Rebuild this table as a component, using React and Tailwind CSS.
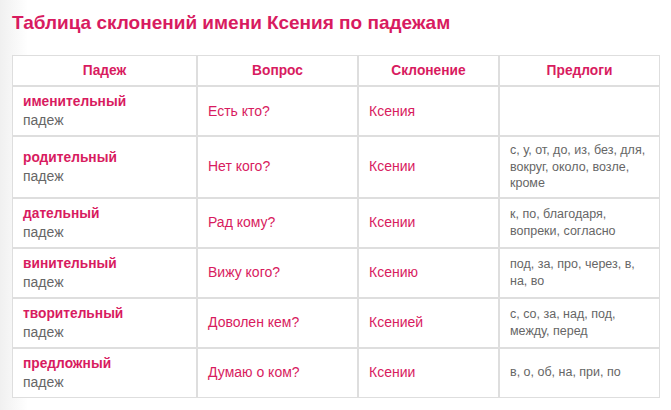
import React from "react";

const rows = [
  { c: "именительный", q: "Есть кто?", d: "Ксения", p: "" },
  { c: "родительный", q: "Нет кого?", d: "Ксении", p: "с, у, от, до, из, без, для, вокруг, около, возле, кроме" },
  { c: "дательный", q: "Рад кому?", d: "Ксении", p: "к, по, благодаря, вопреки, согласно" },
  { c: "винительный", q: "Вижу кого?", d: "Ксению", p: "под, за, про, через, в, на, во" },
  { c: "творительный", q: "Доволен кем?", d: "Ксенией", p: "с, со, за, над, под, между, перед" },
  { c: "предложный", q: "Думаю о ком?", d: "Ксении", p: "в, о, об, на, при, по" },
];

export default function App() {
  return (
    <div
      className="w-[671px] h-[410px] overflow-hidden bg-[linear-gradient(to_right,#f0f0f0,#ffffff_28px)] pl-[12px] pt-[12px]"
      style={{ fontFamily: '"Liberation Sans", Arial, sans-serif' }}
    >
      <h1 className="text-[19px] leading-[21px] font-bold text-[#d81b60]">
        Таблица склонений имени Ксения по падежам
      </h1>
      <table className="mt-[22px] w-[648px] border-separate border-spacing-0 bg-white table-fixed">
        <colgroup>
          <col className="w-[185px]" />
          <col className="w-[161px]" />
          <col className="w-[141px]" />
          <col className="w-[161px]" />
        </colgroup>
        <thead>
          <tr>
            {["Падеж", "Вопрос", "Склонение", "Предлоги"].map((h) => (
              <th
                key={h}
                className="border border-[#dedede] py-[5px] text-center text-[13.75px] leading-[19px] font-bold text-[#d81b60]"
              >
                {h}
              </th>
            ))}
          </tr>
        </thead>
        <tbody>
          {rows.map((r) => (
            <tr key={r.c}>
              <td className="border border-[#dedede] pl-[10px] pr-[8px] py-[5px] align-middle">
                <div className="text-[13.75px] leading-[19px] font-bold text-[#d81b60]">{r.c}</div>
                <div className="text-[14px] leading-[19px] text-[#666666]">падеж</div>
              </td>
              <td className="border border-[#dedede] pl-[10px] pr-[8px] py-[5px] align-middle text-[14px] text-[#d81b60]">
                {r.q}
              </td>
              <td className="border border-[#dedede] pl-[10px] pr-[8px] py-[5px] align-middle text-[14px] text-[#d81b60]">
                {r.d}
              </td>
              <td className="border border-[#dedede] pl-[10px] pr-[8px] py-[5px] align-middle text-[12.5px] leading-[16.5px] text-[#666666]">
                {r.p}
              </td>
            </tr>
          ))}
        </tbody>
      </table>
    </div>
  );
}
